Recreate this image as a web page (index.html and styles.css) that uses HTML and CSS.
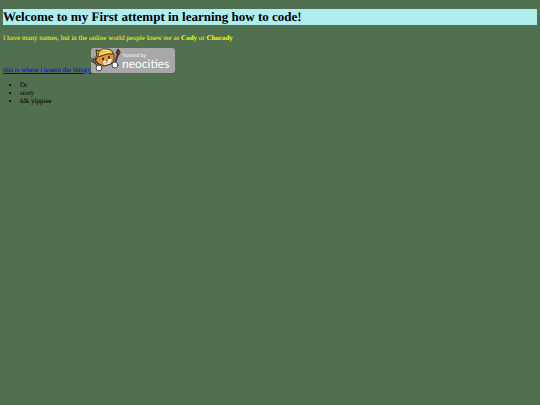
FILE: index.html
```html
<!DOCTYPE html>
<html lang="en">
<head>
<meta charset="utf-8">
<title>My First attempt</title>
<link rel="stylesheet" href="styles.css">
</head>
<body>
<h1>Welcome to my First attempt in learning how to code!</h1>
<p class="intro">I have many names, but in the online world people knew <em>me</em> as <strong>Cody</strong> or <strong>Chocody</strong></p>
<div class="links">
<a class="lesson" href="#">this is where i leaern the thingy</a>
<a class="badge" href="#" aria-label="hosted by neocities">
<svg viewBox="0 0 84 25" width="84" height="25">
<rect width="84" height="25" rx="3" fill="#a8a8a8"/>
<g stroke-linecap="round" stroke-linejoin="round">
<path d="M8 19 3 12" stroke="#333" stroke-width="3"/>
<path d="M8 19 3 12" stroke="#999" stroke-width="1"/>
<path d="M1 10v4l4 1M4 9l1 4" stroke="#333" stroke-width="1" fill="none"/>
<path d="M24 15 27 6" stroke="#333" stroke-width="2"/>
<path d="M27 7 25 5 27 1 29 4z" fill="#a52626" stroke="#3a2020" stroke-width="1"/>
<path d="M6 9 5 2 10 3 20 3 23 6 23 12 20 16 13 18 8 16 5 13z" fill="#e99338" stroke="#3d2b18" stroke-width="1"/>
<path d="M12 14 14 12 18 11 21 11 20 14 18 16 13 17z" fill="#fff2dc"/>
<path d="M7 8C7 3 10 0 15 1c5 0 7 2 7 5l-6 0-9 3z" fill="#edc23c" stroke="#4b3a17" stroke-width="1"/>
<path d="M9 6 18 4M12 2l6 1" stroke="#ffe486" stroke-width="1"/>
<ellipse cx="12" cy="11" rx="1" ry="1.4" fill="#30251e"/>
<ellipse cx="18" cy="9.5" rx="1" ry="1.4" fill="#30251e"/>
<path d="M15 12h2l-1 1zM14 15q2 0 3-1" fill="#8a4420" stroke="#6c3020" stroke-width=".5"/>
<circle cx="8" cy="20" r="3" fill="#fff" stroke="#444" stroke-width="1"/>
<circle cx="24" cy="17" r="3" fill="#fff" stroke="#444" stroke-width="1"/>
</g>
<text class="small" x="32" y="9">hosted by</text>
<text class="brand" x="31" y="20">neocities</text>
</svg>
</a>
</div>
<ul>
<li>Oc</li>
<li>story</li>
<li>Idk yippiee</li>
</ul>
</body>
</html>
```
FILE: styles.css
```css
body {
  margin: 9px 3px;
  background: #507050;
  color: #000;
  font: 7px/8px "Liberation Serif", serif;
  text-rendering: geometricPrecision;
}
h1 {
  margin: 0 0 9px;
  background: #afeeee;
  font-size: 13px;
  line-height: 16px;
}
.intro {
  margin: 0 0 6px;
  color: #ff0;
}
.links {
  display: flex;
  align-items: flex-end;
}
.lesson {
  color: #00e;
  line-height: 6px;
}
.badge svg {
  display: block;
}
.small, .brand {
  fill: #fff;
}
.small {
  font-family: "Open Sans", sans-serif;
  font-size: 5px;
}
.brand {
  font-family: Lato, sans-serif;
  font-size: 12px;
}
ul {
  margin: 8px 0 0;
  padding-left: 17px;
}
```
